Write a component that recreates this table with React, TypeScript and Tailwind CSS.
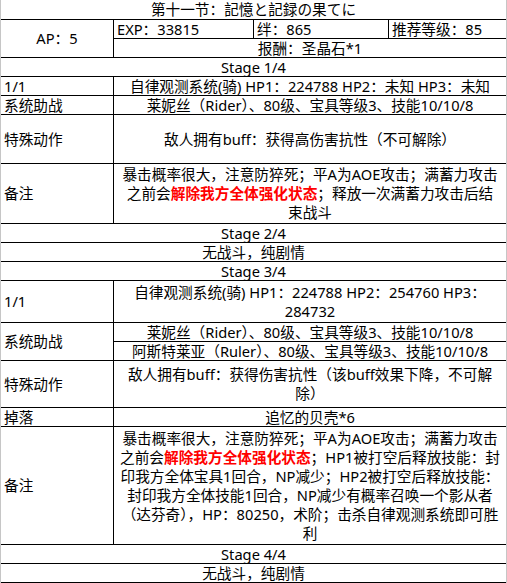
import React from "react";

const Red = ({ children }: { children: React.ReactNode }) => (
  <span className="font-bold text-[#ff0000]">{children}</span>
);

function LRow({
  label,
  h,
  children,
}: {
  label: string;
  h: string;
  children: React.ReactNode;
}) {
  return (
    <div className={`flex border-b border-black ${h}`}>
      <div className="w-[113px] shrink-0 border-r border-black flex items-center pl-[3px]">
        {label}
      </div>
      <div className="flex-1 flex flex-col items-center justify-center text-center whitespace-nowrap">
        {children}
      </div>
    </div>
  );
}

function Full({ children }: { children: React.ReactNode }) {
  return (
    <div className="h-[19px] border-b border-black flex items-center justify-center whitespace-nowrap">
      {children}
    </div>
  );
}

export default function App() {
  return (
    <div className="w-[507px] h-[583px] bg-white border-x border-[#c6c6c6] text-black text-[14.67px] leading-[19px] font-['Noto_Sans','Noto_Sans_CJK_SC',sans-serif] overflow-hidden">
      <div className="h-[20px] border-b border-black flex items-center justify-center whitespace-nowrap">
        第十一节：記憶と記録の果てに
      </div>

      <div className="flex">
        <div className="w-[113px] shrink-0 h-[38px] border-r border-b border-black flex items-center justify-center">
          AP：5
        </div>
        <div className="flex-1 flex flex-col">
          <div className="h-[19px] border-b border-black flex whitespace-nowrap">
            <div className="w-[140px] border-r border-black pl-[3px] flex items-center">EXP：33815</div>
            <div className="w-[135px] border-r border-black pl-[3px] flex items-center">绊：865</div>
            <div className="flex-1 pl-[3px] flex items-center">推荐等级：85</div>
          </div>
          <div className="h-[19px] border-b border-black flex items-center justify-center whitespace-nowrap">
            报酬：圣晶石*1
          </div>
        </div>
      </div>

      <Full>Stage 1/4</Full>
      <LRow label="1/1" h="h-[19px]">
        <div>自律观测系统(骑) HP1：224788 HP2：未知 HP3：未知</div>
      </LRow>
      <LRow label="系统助战" h="h-[19px]">
        <div>莱妮丝（Rider）、80级、宝具等级3、技能10/10/8</div>
      </LRow>
      <LRow label="特殊动作" h="h-[49px]">
        <div>敌人拥有buff：获得高伤害抗性（不可解除）</div>
      </LRow>
      <LRow label="备注" h="h-[60px]">
        <div>暴击概率很大，注意防猝死；平A为AOE攻击；满蓄力攻击</div>
        <div>
          之前会<Red>解除我方全体强化状态</Red>；释放一次满蓄力攻击后结
        </div>
        <div>束战斗</div>
      </LRow>
      <Full>Stage 2/4</Full>
      <Full>无战斗，纯剧情</Full>
      <Full>Stage 3/4</Full>
      <LRow label="1/1" h="h-[42px]">
        <div>自律观测系统(骑) HP1：224788 HP2：254760 HP3：</div>
        <div>284732</div>
      </LRow>

      <div className="flex">
        <div className="w-[113px] shrink-0 h-[38px] border-r border-b border-black flex items-center pl-[3px]">
          系统助战
        </div>
        <div className="flex-1 flex flex-col whitespace-nowrap">
          <div className="h-[19px] border-b border-black flex items-center justify-center">
            莱妮丝（Rider）、80级、宝具等级3、技能10/10/8
          </div>
          <div className="h-[19px] border-b border-black flex items-center justify-center">
            阿斯特莱亚（Ruler）、80级、宝具等级3、技能10/10/8
          </div>
        </div>
      </div>

      <LRow label="特殊动作" h="h-[47px]">
        <div>敌人拥有buff：获得伤害抗性（该buff效果下降，不可解</div>
        <div>除）</div>
      </LRow>
      <LRow label="掉落" h="h-[19px]">
        <div>追忆的贝壳*6</div>
      </LRow>
      <LRow label="备注" h="h-[118px]">
        <div>暴击概率很大，注意防猝死；平A为AOE攻击；满蓄力攻击</div>
        <div>
          之前会<Red>解除我方全体强化状态</Red>；HP1被打空后释放技能：封
        </div>
        <div>印我方全体宝具1回合，NP减少；HP2被打空后释放技能：</div>
        <div>封印我方全体技能1回合，NP减少有概率召唤一个影从者</div>
        <div>（达芬奇），HP：80250，术阶；击杀自律观测系统即可胜</div>
        <div>利</div>
      </LRow>
      <Full>Stage 4/4</Full>
      <Full>无战斗，纯剧情</Full>
    </div>
  );
}
